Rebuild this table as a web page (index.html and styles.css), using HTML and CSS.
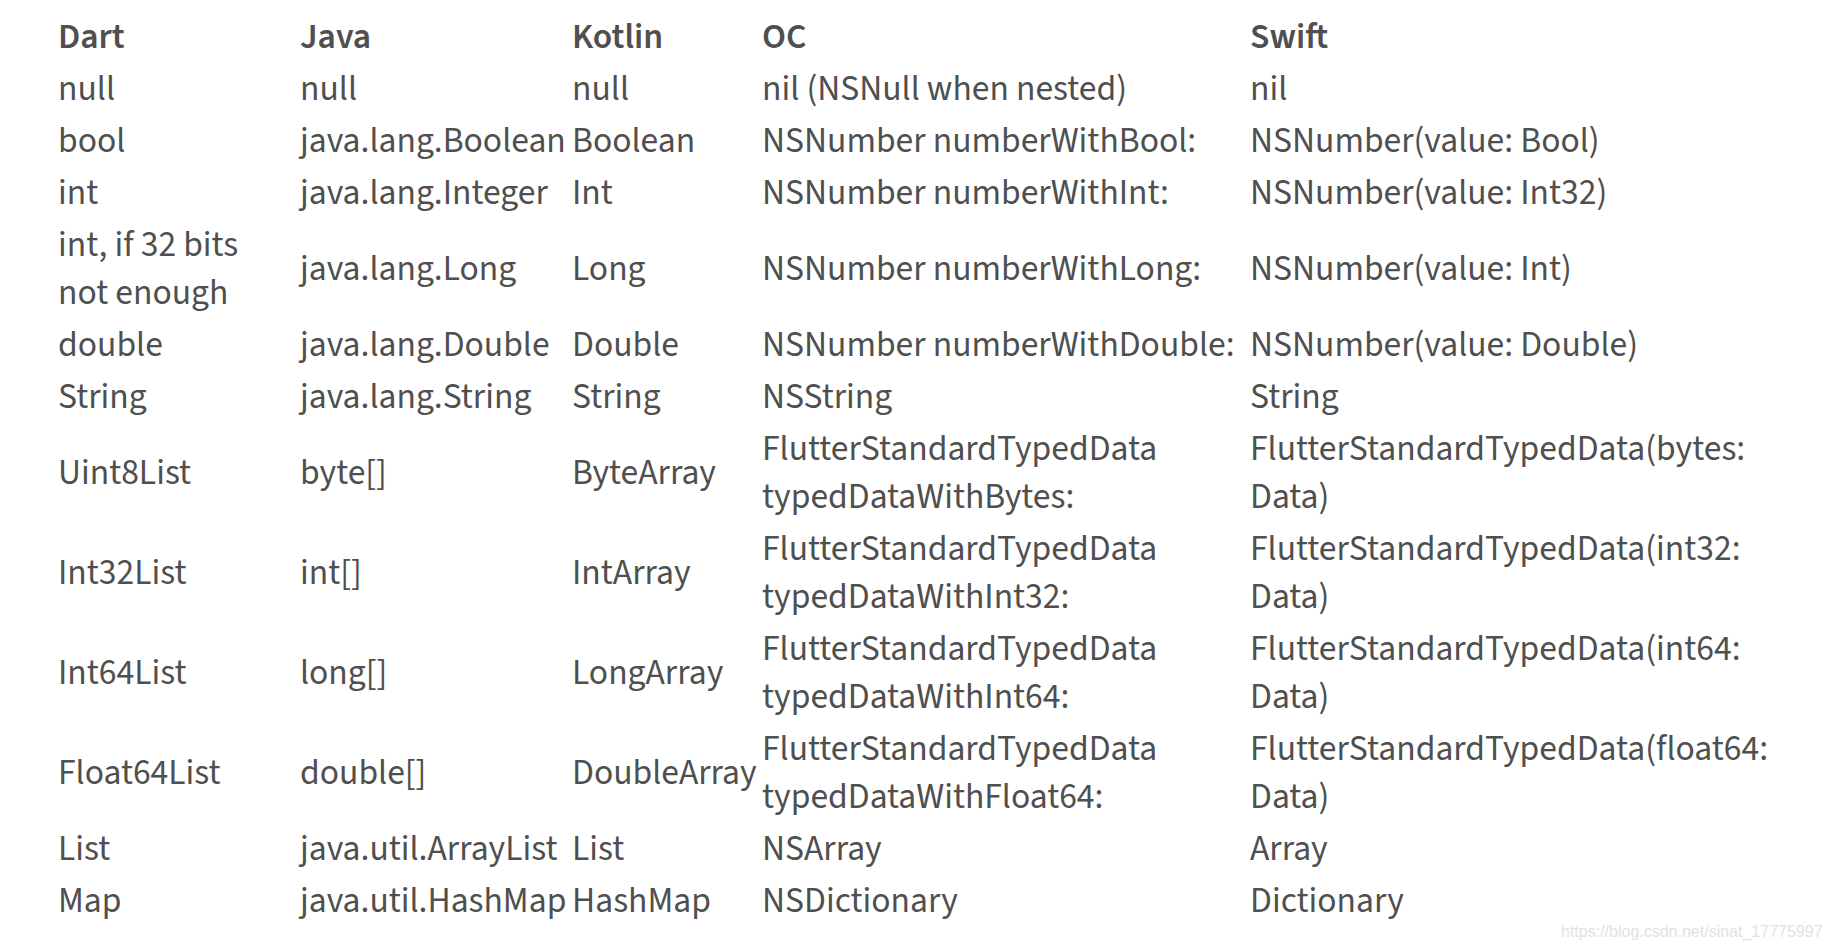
FILE: index.html
```html
<!DOCTYPE html>
<html lang="en">
<head>
<meta charset="utf-8">
<title>Platform channel data types</title>
<link rel="stylesheet" href="styles.css">
</head>
<body>
<div class="page">
  <table class="types">
    <colgroup>
      <col class="c-dart">
      <col class="c-java">
      <col class="c-kotlin">
      <col class="c-oc">
      <col class="c-swift">
    </colgroup>
    <thead>
      <tr><th>Dart</th><th>Java</th><th>Kotlin</th><th>OC</th><th>Swift</th></tr>
    </thead>
    <tbody>
      <tr><td>null</td><td>null</td><td>null</td><td>nil (NSNull when nested)</td><td>nil</td></tr>
      <tr><td>bool</td><td>java.lang.Boolean</td><td>Boolean</td><td>NSNumber numberWithBool:</td><td>NSNumber(value: Bool)</td></tr>
      <tr><td>int</td><td>java.lang.Integer</td><td>Int</td><td>NSNumber numberWithInt:</td><td>NSNumber(value: Int32)</td></tr>
      <tr><td>int, if 32 bits not enough</td><td>java.lang.Long</td><td>Long</td><td>NSNumber numberWithLong:</td><td>NSNumber(value: Int)</td></tr>
      <tr><td>double</td><td>java.lang.Double</td><td>Double</td><td>NSNumber numberWithDouble:</td><td>NSNumber(value: Double)</td></tr>
      <tr><td>String</td><td>java.lang.String</td><td>String</td><td>NSString</td><td>String</td></tr>
      <tr><td>Uint8List</td><td>byte[]</td><td>ByteArray</td><td>FlutterStandardTypedData typedDataWithBytes:</td><td>FlutterStandardTypedData(bytes: Data)</td></tr>
      <tr><td>Int32List</td><td>int[]</td><td>IntArray</td><td>FlutterStandardTypedData typedDataWithInt32:</td><td>FlutterStandardTypedData(int32: Data)</td></tr>
      <tr><td>Int64List</td><td>long[]</td><td>LongArray</td><td>FlutterStandardTypedData typedDataWithInt64:</td><td>FlutterStandardTypedData(int64: Data)</td></tr>
      <tr><td>Float64List</td><td>double[]</td><td>DoubleArray</td><td>FlutterStandardTypedData typedDataWithFloat64:</td><td>FlutterStandardTypedData(float64: Data)</td></tr>
      <tr><td>List</td><td>java.util.ArrayList</td><td>List</td><td>NSArray</td><td>Array</td></tr>
      <tr><td>Map</td><td>java.util.HashMap</td><td>HashMap</td><td>NSDictionary</td><td>Dictionary</td></tr>
    </tbody>
  </table>
  <div class="watermark">https://blog.csdn.net/sinat_17775997</div>
</div>
</body>
</html>
```
FILE: styles.css
```css
html, body {
  margin: 0;
  padding: 0;
  background: #ffffff;
}
body {
  font-family: "Source Sans 3", "Lato", "Noto Sans", sans-serif;
  color: #4f4f4f;
}
.page {
  position: relative;
  width: 1830px;
  height: 950px;
  overflow: hidden;
  padding: 10px 0 0 55px;
  box-sizing: border-box;
}
.types {
  table-layout: fixed;
  border-collapse: separate;
  border-spacing: 2px;
  font-size: 35.6px;
  line-height: 48px;
}
.types th,
.types td {
  padding: 1px;
  text-align: left;
  vertical-align: middle;
}
.types th {
  font-weight: 600;
}
.types td:first-child {
  padding-right: 8px;
}
.c-dart { width: 240px; }
.c-java { width: 270px; }
.c-kotlin { width: 188px; }
.c-oc { width: 486px; }
.c-swift { width: 560px; }
.watermark {
  position: absolute;
  left: 1561px;
  top: 921px;
  font-family: "Liberation Sans", Arial, sans-serif;
  font-size: 16px;
  line-height: 22px;
  color: #e2e2e2;
  white-space: nowrap;
}
```
